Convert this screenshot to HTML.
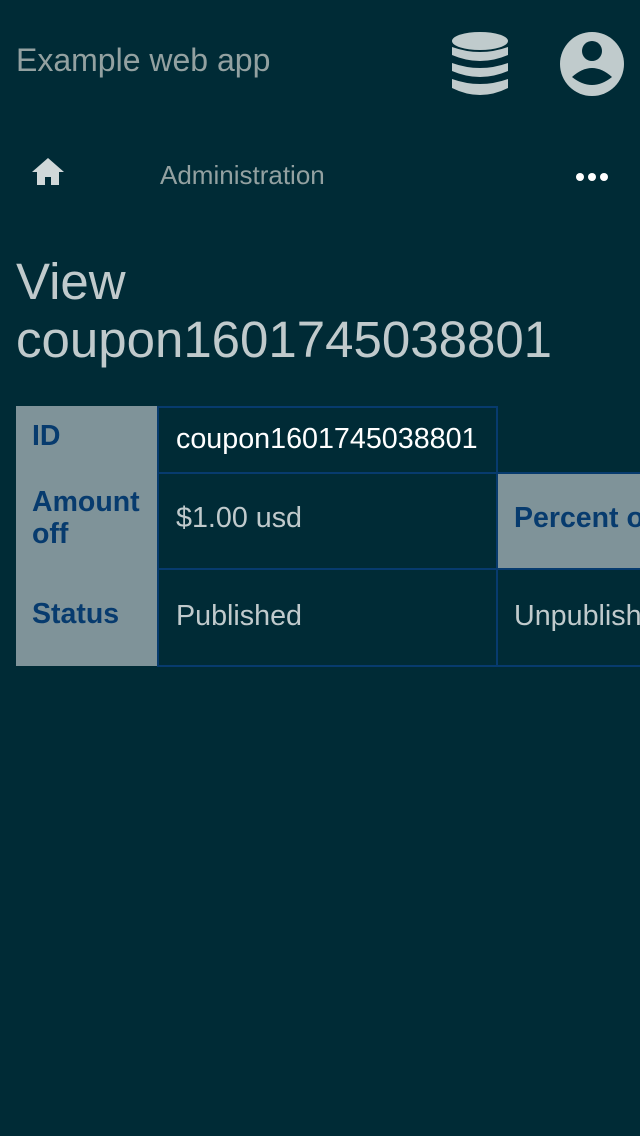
<!DOCTYPE html><html><head><style>
html,body{margin:0;width:640px;height:1136px;overflow:hidden}
body{background:#002b36;font-family:"Liberation Sans",sans-serif;position:relative}
.a{position:absolute;white-space:nowrap}
.th{position:absolute;background:#7f9399;color:#073b6e;font-weight:bold;font-size:28.5px;line-height:32px}
.td{position:absolute;box-sizing:border-box;border:2px solid #073b6e;color:#c0cacc;font-size:28.7px}
</style></head><body>
<div class="a" style="left:16px;top:42px;font-size:32px;color:#93a1a1">Example web app</div>
<svg class="a" style="left:452px;top:32px" width="56" height="64" viewBox="0 0 56 64"><g fill="#c0cbcc"><ellipse cx="28" cy="9" rx="28" ry="9"/><path d="M0 15q28 10 56 0v8q-28 12-56 0z"/><path d="M0 31q28 10 56 0v8q-28 12-56 0z"/><path d="M0 47q28 10 56 0v9q-28 14-56 0z"/></g></svg>
<svg class="a" style="left:560px;top:32px" width="64" height="64" viewBox="0 0 64 64"><circle cx="32" cy="32" r="32" fill="#c0cbcc"/><circle cx="32" cy="19" r="10" fill="#002b36"/><path d="M12 45q20-18 40 0q-20 16-40 0z" fill="#002b36"/></svg>
<svg class="a" style="left:32px;top:158px" width="32" height="28" viewBox="0 0 32 28"><path d="M16 0L0 14h5v13h8v-8h6v8h8V14h5z" fill="#d0d8d9"/></svg>
<div class="a" style="left:160px;top:160px;font-size:26px;color:#93a1a1">Administration</div>
<div class="a" style="left:576px;top:170px"><svg width="32" height="12"><circle cx="4" cy="6" r="4" fill="#fff"/><circle cx="16" cy="6" r="4" fill="#fff"/><circle cx="28" cy="6" r="4" fill="#fff"/></svg></div>
<div class="a" style="left:16px;top:253px;font-size:51px;line-height:58px;color:#c0cacc">View<br>coupon1601745038801</div>
<div class="th" style="left:16px;top:406px;width:142px;height:260px"></div>
<div class="th" style="left:32px;top:420px;background:none">ID</div>
<div class="th" style="left:32px;top:486px;background:none">Amount<br>off</div>
<div class="th" style="left:32px;top:598px;background:none">Status</div>
<div class="td" style="left:157px;top:406px;width:341px;height:68px;color:#fff;padding:15px 0 0 17px">coupon1601745038801</div>
<div class="td" style="left:157px;top:472px;width:341px;height:98px;padding:28px 0 0 17px">$1.00 usd</div>
<div class="td" style="left:157px;top:568px;width:341px;height:99px;padding:30px 0 0 17px">Published</div>
<div class="td" style="left:496px;top:472px;width:144px;height:98px;background:#7f9399;color:#073b6e;font-weight:bold;padding:28px 0 0 16px;white-space:nowrap;overflow:hidden;border-right:none;font-size:28.5px">Percent off</div>
<div class="td" style="left:496px;top:568px;width:144px;height:99px;padding:30px 0 0 16px;white-space:nowrap;overflow:hidden;border-right:none">Unpublished</div>
</body></html>
